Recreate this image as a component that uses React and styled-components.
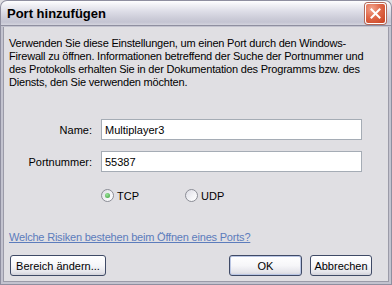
import React from 'react';
import styled, { createGlobalStyle } from 'styled-components';

const GlobalStyle = createGlobalStyle`
  html, body { margin: 0; padding: 0; background: #e0dfe3; }
  * { box-sizing: border-box; }
`;

const Window = styled.div`
  width: 392px;
  height: 285px;
  display: flex;
  flex-direction: column;
  background: #e0dfe3;
  font-family: "Liberation Sans", Arial, sans-serif;
  font-size: 11px;
  color: #000;
  overflow: hidden;
`;

const TitleBar = styled.div`
  height: 25px;
  flex: none;
  display: flex;
  align-items: center;
  justify-content: space-between;
  padding: 0 6px 0 6px;
  border-radius: 7px 7px 0 0;
  border: 1px solid #8f8fa0;
  border-bottom: none;
  background: linear-gradient(#ffffff 0%, #f2f2f6 15%, #dcdce6 45%, #cdcdd9 70%, #c4c4d2 88%, #d4d4de 100%);
`;

const Title = styled.span`
  font-family: "Liberation Sans", Arial, sans-serif;
  font-weight: bold;
  font-size: 13px;
  color: #000;
  margin-top: 1px;
`;

const CloseButton = styled.div`
  width: 21px;
  height: 21px;
  margin-top: 1px;
  margin-right: -1px;
  border-radius: 3px;
  border: 1px solid #fff;
  box-shadow: 0 0 0 1px #b36a5a;
  background: radial-gradient(circle at 30% 25%, #f2a48e 0%, #e0694a 45%, #c8401f 100%);
  display: flex;
  align-items: center;
  justify-content: center;
`;

const Frame = styled.div`
  flex: 1;
  display: flex;
  flex-direction: column;
  border: 3px solid #c3c3cf;
  border-top: 2px solid #c3c3cf;
  box-shadow: inset 1px 0 0 #9b9ba8, inset -1px 0 0 #9b9ba8, inset 0 -1px 0 #9b9ba8;
  outline: 1px solid #8f8fa0;
  outline-offset: -1px;
  padding: 10px 6px 0 6px;
  background: #e0dfe3;
`;

const Intro = styled.p`
  margin: 0;
  line-height: 13px;
  letter-spacing: -0.2px;
  white-space: nowrap;
`;

const FormGrid = styled.div`
  display: grid;
  grid-template-columns: 83px 261px;
  column-gap: 9px;
  row-gap: 11px;
  margin-top: 30px;
  align-items: center;
`;

const Label = styled.label`
  text-align: right;
`;

const TextInput = styled.input`
  height: 21px;
  width: 261px;
  border: 1px solid #a5acb5;
  background: #fff;
  padding: 0 3px;
  font-family: "Liberation Sans", Arial, sans-serif;
  font-size: 11px;
  color: #000;
  outline: none;
`;

const RadioRow = styled.div`
  display: flex;
  margin-top: 17px;
  margin-left: 92px;
  height: 13px;
  align-items: center;
`;

const RadioItem = styled.label`
  display: flex;
  align-items: center;
  width: 84px;
  gap: 3px;
`;

const RadioCircle = styled.span`
  width: 13px;
  height: 13px;
  border-radius: 50%;
  border: 1px solid #8b8d96;
  background: linear-gradient(135deg, #dcdce4 0%, #f4f4f7 60%, #ffffff 100%);
  display: flex;
  align-items: center;
  justify-content: center;
  &::after {
    content: '';
    width: 5px;
    height: 5px;
    border-radius: 50%;
    background: ${p => (p.$checked ? 'radial-gradient(circle at 40% 35%, #9be39b, #3a9e3a)' : 'transparent')};
  }
`;

const HelpLink = styled.a`
  display: block;
  margin-top: 29px;
  line-height: 13px;
  letter-spacing: -0.2px;
  color: #5c7cbc;
  text-decoration: underline;
  cursor: pointer;
`;

const ButtonRow = styled.div`
  display: flex;
  margin-top: 11px;
  padding-left: 1px;
`;

const Button = styled.button`
  height: 21px;
  width: ${p => p.$w}px;
  margin-left: ${p => p.$ml || 0}px;
  border: 1px solid #3f4a66;
  border-radius: 3px;
  background: linear-gradient(#ffffff 0%, #f6f6f9 50%, #e4e4ea 85%, #d2d2da 100%);
  box-shadow: ${p => (p.$default ? 'inset 0 0 0 1px #bac6e4' : 'none')};
  font-family: "Liberation Sans", Arial, sans-serif;
  font-size: 11px;
  color: #000;
  padding: 0;
`;

export default function App() {
  return (
    <>
      <GlobalStyle />
      <Window>
        <TitleBar>
          <Title>Port hinzufügen</Title>
          <CloseButton>
            <svg width="11" height="11" viewBox="0 0 11 11">
              <path d="M1.5 1.5 L9.5 9.5 M9.5 1.5 L1.5 9.5" stroke="#fff" strokeWidth="2" strokeLinecap="square" />
            </svg>
          </CloseButton>
        </TitleBar>
        <Frame>
          <Intro>
            Verwenden Sie diese Einstellungen, um einen Port durch den Windows-<br />
            Firewall zu öffnen. Informationen betreffend der Suche der Portnummer und<br />
            des Protokolls erhalten Sie in der Dokumentation des Programms bzw. des<br />
            Diensts, den Sie verwenden möchten.
          </Intro>
          <FormGrid>
            <Label>Name:</Label>
            <TextInput defaultValue="Multiplayer3" />
            <Label>Portnummer:</Label>
            <TextInput defaultValue="55387" />
          </FormGrid>
          <RadioRow>
            <RadioItem><RadioCircle $checked />TCP</RadioItem>
            <RadioItem><RadioCircle />UDP</RadioItem>
          </RadioRow>
          <HelpLink>Welche Risiken bestehen beim Öffnen eines Ports?</HelpLink>
          <ButtonRow>
            <Button $w={96}>Bereich ändern...</Button>
            <Button $w={73} $ml={123} $default>OK</Button>
            <Button $w={62} $ml={8}>Abbrechen</Button>
          </ButtonRow>
        </Frame>
      </Window>
    </>
  );
}
